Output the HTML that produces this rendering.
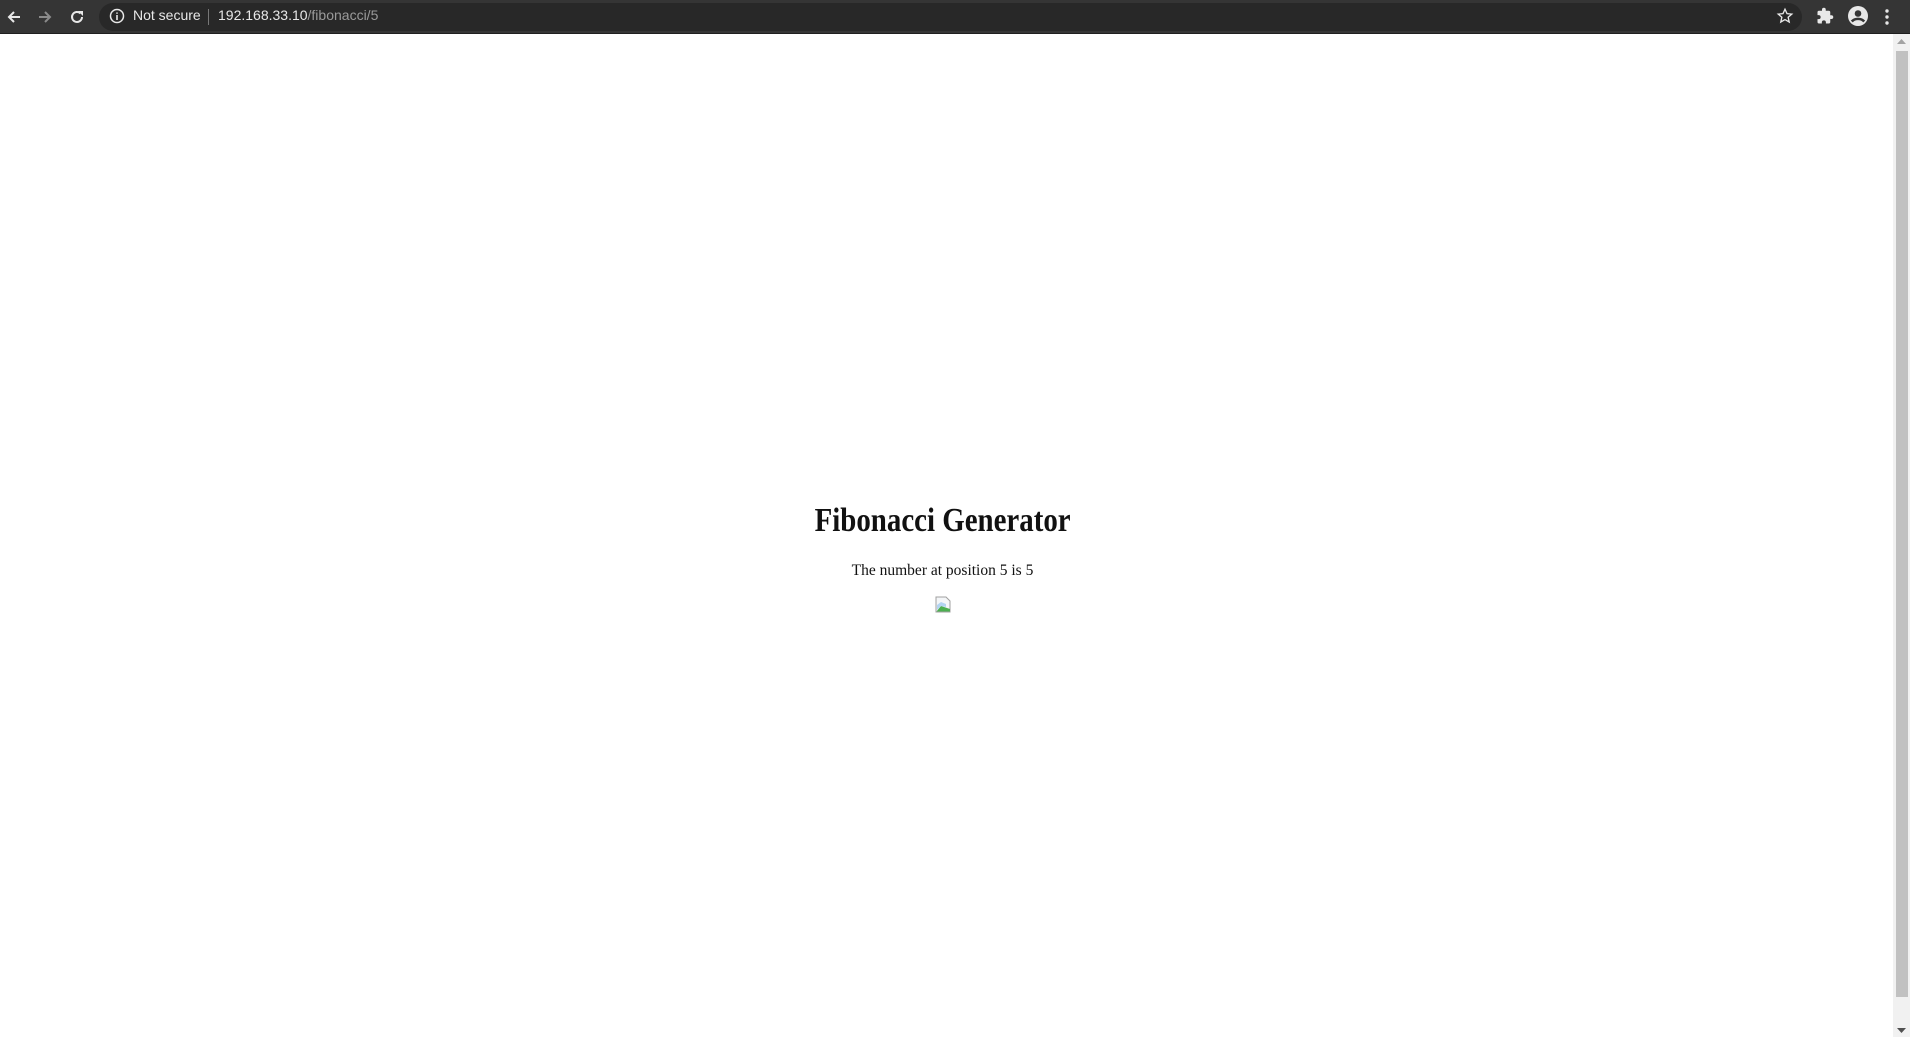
<!DOCTYPE html>
<html><head><meta charset="utf-8"><style>
*{margin:0;padding:0;box-sizing:border-box}
html,body{width:1910px;height:1037px;overflow:hidden;background:#fff;font-family:"Liberation Sans",sans-serif}
#bar{position:absolute;left:0;top:0;width:1910px;height:34px;background:#353535;border-bottom:1px solid #1f1f1f}
#omni{position:absolute;left:99px;top:3px;width:1703px;height:28px;border-radius:14px;background:#282828}
.t{position:absolute;top:7px;font-size:14px;color:#e8e8e8;white-space:nowrap}
#sb{position:absolute;left:1893px;top:34px;width:17px;height:1003px;background:#f1f1f1}
#th{position:absolute;left:1896px;top:51px;width:12px;height:946px;background:#c1c1c1}
h1{position:absolute;left:0;width:1885px;top:504px;text-align:center;font-family:"Liberation Serif",serif;font-size:34px;line-height:34px;font-weight:bold;color:#111}
h1 span{display:inline-block;transform:scaleX(0.85)}
p{position:absolute;left:0;width:1885px;top:562px;text-align:center;font-family:"Liberation Serif",serif;font-size:15.5px;color:#111}
</style></head><body>
<div id="bar">
<svg style="position:absolute;left:5px;top:8px" width="18" height="18" viewBox="0 0 18 18"><path d="M15 9H4M9 4L4 9l5 5" stroke="#e8e8e8" stroke-width="2" fill="none"/></svg>
<svg style="position:absolute;left:36px;top:8px" width="18" height="18" viewBox="0 0 18 18"><path d="M3 9h11M9 4l5 5-5 5" stroke="#8a8a8a" stroke-width="2" fill="none"/></svg>
<svg style="position:absolute;left:68px;top:8px" width="18" height="18" viewBox="0 0 18 18"><path d="M14 9a5 5 0 1 1-1.5-3.6" stroke="#e8e8e8" stroke-width="2" fill="none"/><path d="M10 3h5v5z" fill="#e8e8e8"/></svg>
<div id="omni"></div>
<svg style="position:absolute;left:109px;top:8px" width="16" height="16" viewBox="0 0 16 16"><circle cx="8" cy="8" r="6.5" stroke="#e8e8e8" stroke-width="1.5" fill="none"/><path d="M8 7v5M8 4.5v1.2" stroke="#e8e8e8" stroke-width="1.6"/></svg>
<span class="t" style="left:133px">Not secure</span>
<div style="position:absolute;left:208px;top:9px;width:1px;height:16px;background:#777"></div>
<span class="t" style="left:218px">192.168.33.10<span style="color:#9a9a9a">/fibonacci/5</span></span>
<svg style="position:absolute;left:1776px;top:7px" width="18" height="18" viewBox="0 0 24 24"><path d="M12 3l2.7 5.9 6.3.6-4.8 4.2 1.4 6.3L12 16.8 6.4 20l1.4-6.3L3 9.5l6.3-.6z" stroke="#e8e8e8" stroke-width="1.8" fill="none"/></svg>
<svg style="position:absolute;left:1816px;top:7px" width="18" height="18" viewBox="0 0 24 24"><path d="M20.5 11H19V7a2 2 0 0 0-2-2h-4V3.5a2.5 2.5 0 0 0-5 0V5H4a2 2 0 0 0-2 2v3.8h1.5a2.7 2.7 0 0 1 0 5.4H2V20a2 2 0 0 0 2 2h3.8v-1.5a2.7 2.7 0 0 1 5.4 0V22H17a2 2 0 0 0 2-2v-4h1.5a2.5 2.5 0 0 0 0-5z" fill="#e8e8e8"/></svg>
<svg style="position:absolute;left:1847px;top:5px" width="22" height="22" viewBox="0 0 22 22"><circle cx="11" cy="11" r="10" fill="#e8e8e8"/><circle cx="11" cy="8.5" r="3.3" fill="#353535"/><path d="M4.8 16.5c3-3.5 9.4-3.5 12.4 0" stroke="#353535" stroke-width="2.6" fill="none"/></svg>
<svg style="position:absolute;left:1884px;top:8px" width="6" height="18" viewBox="0 0 6 18"><circle cx="3" cy="3" r="1.7" fill="#e8e8e8"/><circle cx="3" cy="9" r="1.7" fill="#e8e8e8"/><circle cx="3" cy="15" r="1.7" fill="#e8e8e8"/></svg>
</div>
<h1><span>Fibonacci Generator</span></h1>
<p>The number at position 5 is 5</p>
<svg style="position:absolute;left:935px;top:596px" width="16" height="17" viewBox="0 0 16 17"><path d="M1 1h10l4 4v11H1z" fill="#f4f6f8" stroke="#a0a0a0"/><path d="M1.5 15.5L6 10l9 3v2.5z" fill="#4caf50"/><path d="M2 9l4-3 5 2v3L6 10 2 14z" fill="#b3d4f2"/></svg>
<div id="sb"></div><div id="th"></div>
<svg style="position:absolute;left:1897px;top:38px" width="9" height="6"><path d="M0 6L4.5 1 9 6z" fill="#a3a3a3"/></svg>
<svg style="position:absolute;left:1897px;top:1028px" width="9" height="6"><path d="M0 0L4.5 5 9 0z" fill="#505050"/></svg>
</body></html>
